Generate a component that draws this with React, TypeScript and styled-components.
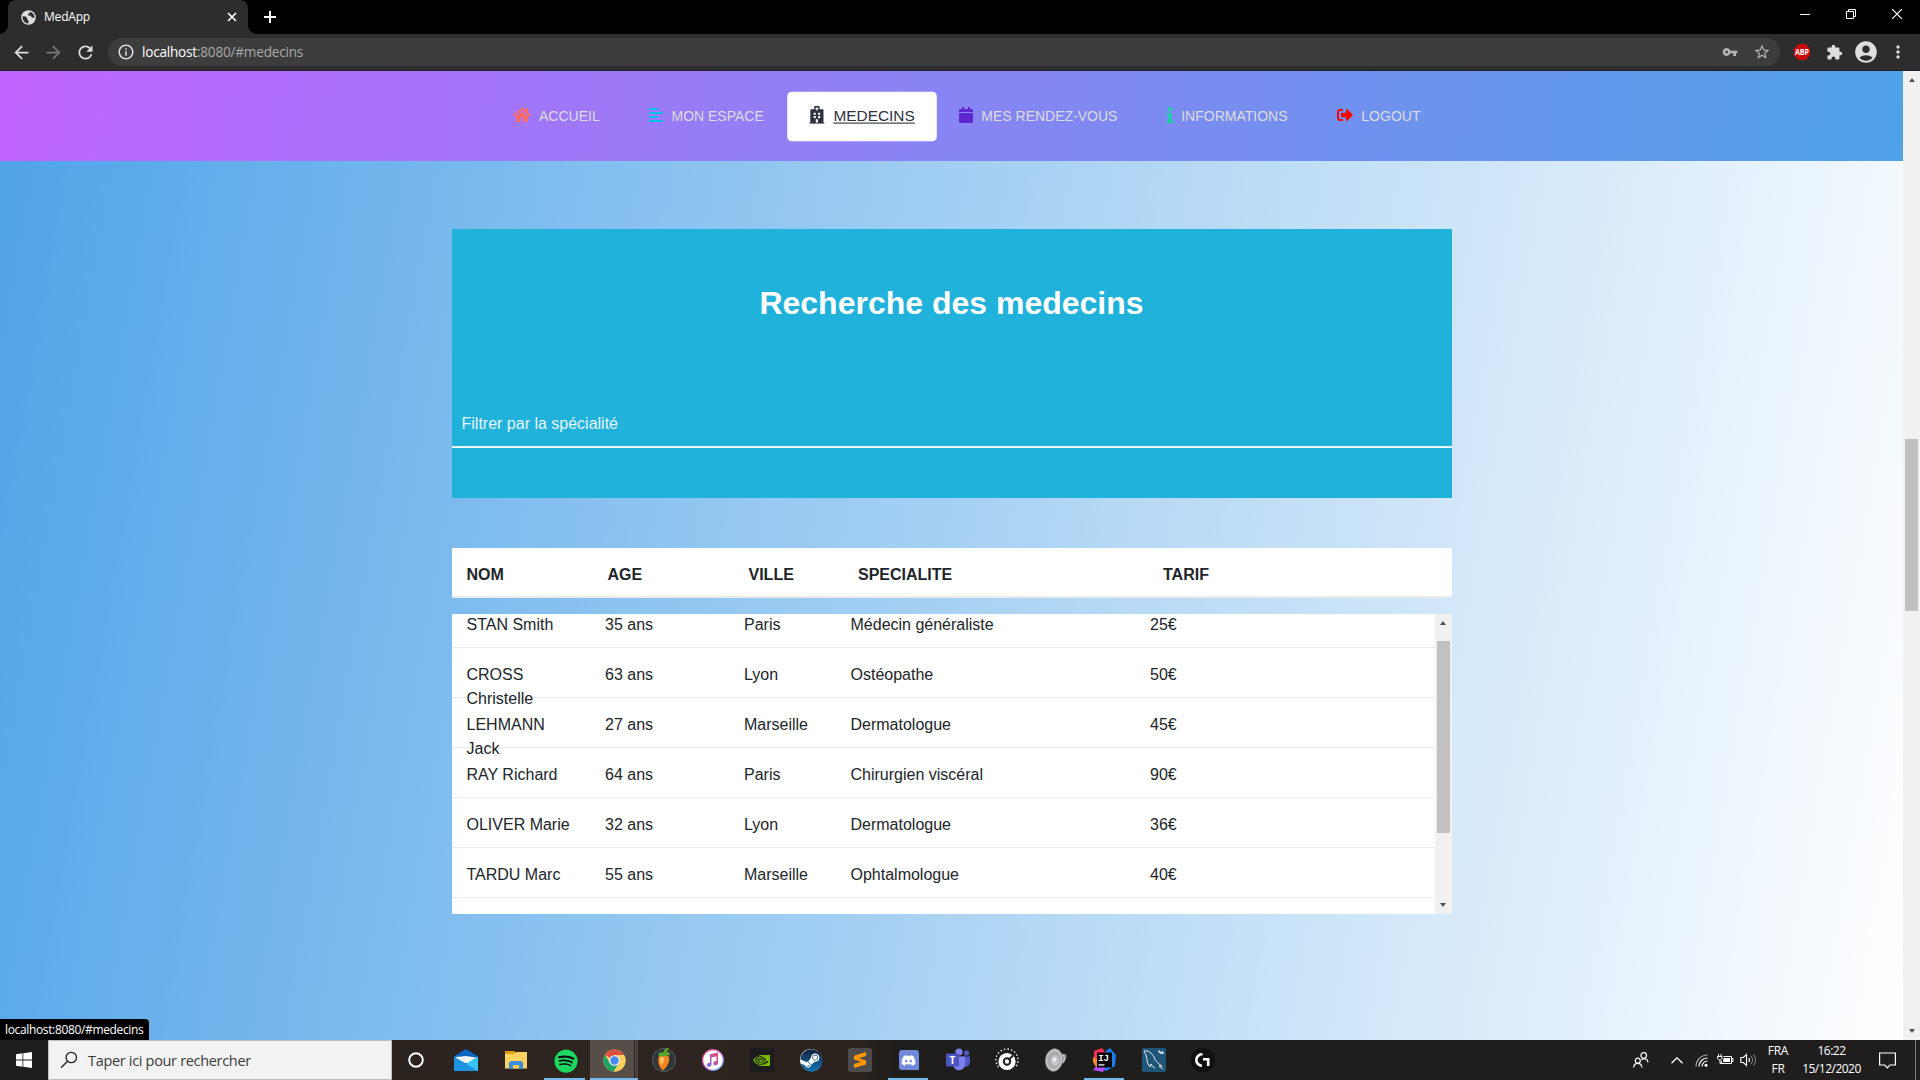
import React from "react";
import styled, { createGlobalStyle, css } from "styled-components";
import {
  FaHome,
  FaAlignLeft,
  FaHospital,
  FaCalendar,
  FaInfo,
  FaSignOutAlt,
  FaSpotify,
  FaSteam,
  FaDiscord,
} from "react-icons/fa";
import {
  MdArrowBack,
  MdArrowForward,
  MdRefresh,
  MdInfoOutline,
  MdVpnKey,
  MdStarBorder,
  MdExtension,
  MdAccountCircle,
  MdMoreVert,
} from "react-icons/md";
import { SiNvidia } from "react-icons/si";

const uiFont = `"Open Sans", "Noto Sans", sans-serif`;
const pageFont = `"Liberation Sans", Arial, sans-serif`;

const GlobalStyle = createGlobalStyle`
  * { box-sizing: border-box; }
  body { margin: 0; overflow: hidden; background: #000; }
  svg { display: block; flex: none; }
`;

const Screen = styled.div`
  width: 1920px;
  height: 1080px;
  display: flex;
  flex-direction: column;
  overflow: hidden;
`;

/* ---------- browser frame ---------- */

const TabStrip = styled.div`
  height: 34px;
  flex: none;
  display: flex;
  background: #000;
  padding-left: 8px;
`;

const Tab = styled.div`
  position: relative;
  width: 240px;
  height: 34px;
  padding: 0 10px 0 13px;
  display: flex;
  align-items: center;
  background: #2d2d2d;
  border-radius: 8px 8px 0 0;
  color: #dedede;
  &::before,
  &::after {
    content: "";
    position: absolute;
    bottom: 0;
    width: 8px;
    height: 8px;
  }
  &::before {
    left: -8px;
    background: radial-gradient(circle at 0 0, #000 7.5px, #2d2d2d 8px);
  }
  &::after {
    right: -8px;
    background: radial-gradient(circle at 100% 0, #000 7.5px, #2d2d2d 8px);
  }
  span {
    flex: 1;
    margin: 0 0 1px 8px;
    font: 12px/16px ${uiFont};
    letter-spacing: -0.2px;
    color: #fff;
  }
`;

const NewTab = styled.div`
  width: 44px;
  display: grid;
  place-items: center;
`;

const WindowButtons = styled.div`
  margin-left: auto;
  display: flex;
  height: 28px;
`;

const WindowButton = styled.div`
  width: 46px;
  display: grid;
  place-items: center;
`;

const Toolbar = styled.div`
  height: 37px;
  flex: none;
  display: flex;
  align-items: center;
  background: #2d2d2d;
  border-bottom: 1px solid #201f26;
  padding: 0 6px 0 5px;
`;

const ToolButton = styled.div<{ $tone?: string }>`
  width: 32px;
  height: 32px;
  display: grid;
  place-items: center;
  color: ${(p) => p.$tone ?? "#dedede"};
`;

const Omnibox = styled.div`
  flex: 1;
  height: 28px;
  margin: 0 6px 0 7px;
  padding: 0 2px 0 9px;
  display: flex;
  align-items: center;
  border-radius: 14px;
  background: #3d3d3d;
  color: #dedede;
`;

const Url = styled.div`
  flex: 1;
  margin-left: 7px;
  font: 13.6px/20px ${uiFont};
  letter-spacing: -0.22px;
  color: #a9a9a9;
  b {
    font-weight: 400;
    color: #fff;
  }
`;

/* ---------- page ---------- */

const Viewport = styled.div`
  height: 969px;
  flex: none;
  display: flex;
`;

const Page = styled.main`
  position: relative;
  width: 1903px;
  font-family: ${pageFont};
  background: linear-gradient(100deg, #4fa3e8, #fff);
  display: flex;
  flex-direction: column;
  align-items: center;
`;

const Nav = styled.nav`
  width: 100%;
  height: 90px;
  display: flex;
  align-items: center;
  gap: 9.8px;
  padding-left: 493px;
  background: linear-gradient(100deg, #c165ff, #4fa3e8);
`;

const NavItem = styled.a<{ $tint: string; $icon: number; $active?: boolean }>`
  height: 45px;
  margin-top: 1px;
  padding: 0 20px;
  display: flex;
  align-items: center;
  gap: 8px;
  border-radius: 4px;
  font-size: 14px;
  line-height: 21px;
  color: #dddddf;
  white-space: nowrap;
  svg {
    color: ${(p) => p.$tint};
    height: 16px;
    width: ${(p) => p.$icon}px;
    margin-bottom: 3px;
  }
  ${(p) =>
    p.$active &&
    css`
      background: #fff;
      color: #2e3240;
      transform: scale(1.1);
      span {
        text-decoration: underline;
      }
    `}
`;

const SearchCard = styled.section`
  width: 1000px;
  height: 269px;
  margin-top: 68px;
  background: #20b2db;
  display: flex;
  flex-direction: column;
  color: #fff;
`;

const Title = styled.h1`
  margin: 54px 0 0;
  font-size: 32px;
  line-height: 40px;
  font-weight: 700;
  text-align: center;
`;

const Filter = styled.div`
  margin-top: 78px;
  height: 47px;
  padding: 11px 10px 0;
  font-size: 16px;
  line-height: 24px;
  color: #e6f4fb;
  border-bottom: 2px solid #eaf5fc;
`;

const HeadRow = styled.div`
  width: 1000px;
  height: 50px;
  margin-top: 50px;
  padding: 15px 15px 0;
  display: grid;
  grid-template-columns: 141px 141px 109.5px 305px 1fr;
  background: #fff;
  border-bottom: 2px solid #ebebeb;
  font-size: 16px;
  line-height: 24px;
  font-weight: 700;
  color: #212529;
`;

const Table = styled.div`
  width: 1000px;
  height: 300px;
  margin-top: 16px;
  display: flex;
  background: #fff;
  overflow: hidden;
`;

const Rows = styled.div`
  flex: 1;
  margin-top: -16px;
`;

const Row = styled.div`
  height: 50px;
  padding: 15px 15px 0;
  display: grid;
  grid-template-columns: 138.5px 139px 106.5px 299.5px 1fr;
  border-bottom: 1px solid #ececee;
  font-size: 16px;
  line-height: 24px;
  color: #212529;
`;

const Name = styled.span`
  max-width: 110px;
`;

const ScrollTrack = styled.div`
  width: 17px;
  display: flex;
  flex-direction: column;
  align-items: center;
  background: #f1f1f1;
`;

const ScrollArrow = styled.div<{ $down?: boolean }>`
  width: 17px;
  height: 17px;
  display: grid;
  place-items: center;
  margin-top: ${(p) => (p.$down ? "auto" : 0)};
  padding-bottom: ${(p) => (p.$down ? "1px" : 0)};
  &::after {
    content: "";
    border: 3.5px solid transparent;
    border-top: ${(p) => (p.$down ? "4px solid #505050" : "0")};
    border-bottom: ${(p) => (p.$down ? "0" : "4px solid #505050")};
  }
`;

const Thumb = styled.div<{ $offset: number; $size: number }>`
  width: 13px;
  height: ${(p) => p.$size}px;
  margin-top: ${(p) => p.$offset}px;
  background: #c1c1c1;
`;

const StatusBubble = styled.div`
  position: absolute;
  left: 0;
  bottom: 0;
  width: 149px;
  height: 21px;
  padding-left: 5px;
  border-radius: 0 4px 0 0;
  background: #000;
  color: #fff;
  font: 12px/21px ${uiFont};
  letter-spacing: -0.35px;
  white-space: nowrap;
`;

/* ---------- taskbar ---------- */

const Taskbar = styled.footer`
  height: 40px;
  flex: none;
  display: flex;
  background: linear-gradient(
    90deg,
    #1f1e1e 0,
    #1f1e1e 60px,
    #2b231e 392px,
    #2f251f 620px,
    #2b221d 860px,
    #1f1e1d 900px,
    #1f1e1d 100%
  );
  color: #fff;
  font-family: ${uiFont};
`;

const Start = styled.div`
  width: 48px;
  display: grid;
  place-items: center;
`;

const SearchBox = styled.div`
  width: 344px;
  display: flex;
  align-items: center;
  gap: 10px;
  padding-left: 11px;
  background: #f2f2f2;
  border: 1px solid #bdbdbd;
  color: #3a3a3a;
  font-size: 14.5px;
  letter-spacing: -0.32px;
`;

const Slot = styled.div<{ $running?: boolean; $active?: boolean; $width?: number }>`
  position: relative;
  width: ${(p) => p.$width ?? 49}px;
  display: grid;
  place-items: center;
  ${(p) =>
    p.$active &&
    css`
      background: linear-gradient(90deg, #574d49 0, #574d49 44px, #2c2624 44px, #2c2624 45px, #4a423e 45px);
      width: 48px;
      margin-right: 1px;
    `}
  &::after {
    content: "";
    position: absolute;
    bottom: 0;
    left: 4px;
    right: 5px;
    ${(p) => p.$active && "left: 0; right: 0;"}
    height: 2px;
    background: ${(p) => (p.$running || p.$active ? "#76b9ed" : "transparent")};
  }
`;

const Disc = styled.div<{ $bg: string; $size?: number; $radius?: string }>`
  width: ${(p) => p.$size ?? 24}px;
  height: ${(p) => p.$size ?? 24}px;
  border-radius: ${(p) => p.$radius ?? "50%"};
  background: ${(p) => p.$bg};
  display: grid;
  place-items: center;
`;

const Tray = styled.div`
  margin-left: auto;
  display: flex;
`;

const TrayCell = styled.div<{ $w: number }>`
  width: ${(p) => p.$w}px;
  display: grid;
  place-items: center;
  align-content: center;
  font-size: 12px;
  line-height: 18px;
  letter-spacing: -0.3px;
  text-align: center;
  white-space: nowrap;
`;

const Clock = styled(TrayCell)`
  letter-spacing: -0.5px;
`;

const ShowDesktop = styled.div`
  width: 5px;
  margin-left: 8px;
  border-left: 1px solid #7b7b7b;
`;

const HEAD = ["NOM", "AGE", "VILLE", "SPECIALITE", "TARIF"];

const DOCTORS = [
  ["STAN Smith", "35 ans", "Paris", "Médecin généraliste", "25€"],
  ["CROSS Christelle", "63 ans", "Lyon", "Ostéopathe", "50€"],
  ["LEHMANN Jack", "27 ans", "Marseille", "Dermatologue", "45€"],
  ["RAY Richard", "64 ans", "Paris", "Chirurgien viscéral", "90€"],
  ["OLIVER Marie", "32 ans", "Lyon", "Dermatologue", "36€"],
  ["TARDU Marc", "55 ans", "Marseille", "Ophtalmologue", "40€"],
];

const GlobeIcon = () => (
  <svg width="15" height="15" viewBox="0 0 15 15">
    <circle cx="7.500" cy="7.500" r="7.300" fill="#dedede" />
    <path
      d="M1.600 6.200 4.700 6.600 6.300 8.200v1.500l1.300 1-.2 2.700C4 13.300 1.300 10.500 1.600 6.200zM6.500 1.800 8.500 1.700 8.800 3 6.900 4.200l.3 1.300 2.500.3 1.200 1.700 2.500.4C13.800 4.500 11 1.300 6.500 1.800z"
      fill="#2d2d2d"
    />
  </svg>
);

const MailIcon = () => (
  <svg width="24" height="24" viewBox="0 0 24 24">
    <path d="M0 8.500 12 1l12 7.500v2L12 16 0 10.500z" fill="#0a5fb4" />
    <path d="M2 8h20v7H2z" fill="#f3f3f3" />
    <path d="M0 8.500 12 16 0 23z" fill="#2aa3e6" />
    <path d="M24 8.500V23H0z" fill="#38c5f5" />
    <path d="M0 9v14h24L8.500 13.800z" fill="#1e93e0" />
    <path d="M0 8.500 12 1l12 7.500-2 1L12 8l-10 1z" fill="#0b64bd" />
  </svg>
);

const FolderIcon = () => (
  <svg width="22" height="18" viewBox="0 0 22 18">
    <path d="M0 0h9l2 2v3H0z" fill="#e2a10a" />
    <path d="M0 3h9l2-2h11v16.500H0z" fill="#fdd462" />
    <path d="M4 18v-6.500L6 10h10l2 1.500V18h-4v-4H8v4z" fill="#3a8fdc" />
    <path d="M8 14h6v3.500H8z" fill="#fbc94a" />
  </svg>
);

const ChromeIcon = () => (
  <svg width="23" height="23" viewBox="0 0 24 24">
    <circle cx="12" cy="12" r="11.500" fill="#fdd15b" />
    <path d="M12 12 2 6.300A11.500 11.500 0 0 1 22 6.300H12z" fill="#dd5144" />
    <path d="M2 6.300A11.500 11.500 0 0 0 11.300 23.500L16.600 14.500 12 17 7.500 15z" fill="#1da462" />
    <path d="M12 6.500h10.100A11.500 11.500 0 0 1 11.300 23.500L16.700 14.600z" fill="#fdd15b" />
    <circle cx="12" cy="12" r="5.600" fill="#f4f4f4" />
    <circle cx="12" cy="12" r="4.400" fill="#4a8af4" />
  </svg>
);

const FruitIcon = () => (
  <svg width="24" height="24" viewBox="0 0 24 24">
    <circle cx="12" cy="12" r="11.500" fill="#2f3436" stroke="#566066" />
    <path d="M7 8c3-2 8-1.500 10 1 1 4-1 9-6 13.500-4-2.500-6-9.500-4-14.500z" fill="#f5861f" />
    <path d="M8.500 9c2-1 3.500 0 3.500 2s-1 5-2.500 6c-1.500-2-2-5-1-8z" fill="#ffc266" />
    <path d="M6 6c2-2 4-2 5-1 1-4 4-6 6-5-1 1-2 3-2 4 2 0 3 1 3 3-3 0-4 2-6 1-2 1-5 1-6-2z" fill="#58a52c" />
  </svg>
);

const NoteIcon = () => (
  <svg width="24" height="24" viewBox="0 0 24 24">
    <defs>
      <linearGradient id="ring" x1="0" y1="0" x2="1" y2="1">
        <stop offset="0" stopColor="#ff4f6d" />
        <stop offset=".5" stopColor="#c65be0" />
        <stop offset="1" stopColor="#38b6f0" />
      </linearGradient>
      <linearGradient id="note" x1="1" y1="0" x2="0" y2="1">
        <stop offset="0" stopColor="#f8416b" />
        <stop offset="1" stopColor="#6a6cf2" />
      </linearGradient>
    </defs>
    <circle cx="12" cy="12" r="10.400" fill="#fff" stroke="url(#ring)" strokeWidth="1.200" />
    <path
      d="M9 6.200 17 4.500v10.800a2.300 2 0 1 1-1.500-2V8.300L10.500 9.400v7.400A2.300 2 0 1 1 9 14.900z"
      fill="url(#note)"
    />
  </svg>
);

const SublimeIcon = () => (
  <svg width="24" height="24" viewBox="0 0 24 24">
    <rect width="24" height="24" rx="2" fill="#4b4b4b" />
    <path d="M6 7.800 18 4v4l-7 2.200 7 2.200v4L6 20v-4l7-2.200-7-2.200z" fill="#ff9800" />
  </svg>
);

const DiscordIcon = () => (
  <Disc $bg="#7289da" $size={20} $radius="3px 3px 0 3px">
    <FaDiscord size={15} color="#fff" />
  </Disc>
);

const TeamsIcon = () => (
  <svg width="24" height="24" viewBox="0 0 24 24">
    <circle cx="20.500" cy="5" r="2.600" fill="#5059c9" />
    <circle cx="13" cy="4" r="3.600" fill="#7b83eb" />
    <path d="M16 8.500h8v6.500a4.500 4.500 0 0 1-7 3z" fill="#5059c9" />
    <path d="M7.500 8.500H19v8a6 6 0 0 1-11.500 2z" fill="#7b83eb" />
    <rect y="5.500" width="13" height="13" rx="1" fill="#4b53bc" />
    <text x="6.500" y="15.600" textAnchor="middle" fontSize="10" fontWeight="700" fill="#fff" fontFamily="Open Sans">
      T
    </text>
  </svg>
);

const DialIcon = () => (
  <svg width="24" height="24" viewBox="0 0 24 24">
    <path
      d="M3.500 19A11 11 0 1 1 20.500 19"
      fill="none"
      stroke="#fff"
      strokeWidth="1.400"
      strokeDasharray="1.400 2.200"
    />
    <circle cx="12" cy="13.500" r="8.600" fill="#fff" />
    <circle cx="12" cy="13.500" r="3.200" fill="none" stroke="#1f1e1d" strokeWidth="2" />
    <path d="m13.500 12 4.500-4.500" stroke="#1f1e1d" strokeWidth="1.800" />
  </svg>
);

const SpeakerIcon = () => (
  <svg width="22" height="24" viewBox="0 0 22 24">
    <path d="M12 2.500c3 3 6 3.500 9 3.500l.5 4c-1 1-1.500 3-2.500 5-3 0-5 3-8 6.500z" fill="#8e9294" />
    <path d="M18 6.500c1.500 2 1.500 5 .5 8" fill="none" stroke="#d6d8d9" strokeWidth="1" />
    <ellipse cx="9" cy="12" rx="8.500" ry="11.300" transform="rotate(8 9 12)" fill="#c9cccd" stroke="#8a8d8f" strokeWidth=".8" />
    <ellipse cx="9" cy="12" rx="6.800" ry="9.300" transform="rotate(8 9 12)" fill="#a9adaf" />
    <ellipse cx="10" cy="12.500" rx="4" ry="5" fill="#c3c7c9" />
    <ellipse cx="9.500" cy="11.500" rx="1.800" ry="2.200" fill="#e9ebec" />
  </svg>
);

const IntelliJIcon = () => (
  <svg width="24" height="24" viewBox="0 0 24 24">
    <path d="M1 3 9 0l6 8-5 9-9-3z" fill="#fc3158" />
    <path d="M0 9l6 3-2 9-4-7z" fill="#f98b2c" />
    <path d="M13 3 17 0l6 7-1 11-9 5-6-3z" fill="#1a7df0" />
    <path d="M0 22 8 13l5 5-3 6z" fill="#b74af7" />
    <rect x="4" y="4.500" width="15" height="15" fill="#000" />
    <text x="5.200" y="12.800" fontSize="9" fontWeight="700" fill="#fff" fontFamily="Liberation Mono">
      IJ
    </text>
    <rect x="5.500" y="16.300" width="6" height="1.300" fill="#fff" />
  </svg>
);

const DolphinIcon = () => (
  <svg width="24" height="24" viewBox="0 0 24 24">
    <rect width="24" height="24" rx="2" fill="#1f5577" />
    <path
      d="M2 3c4-1 8 2 10 6 1 3 3 6 8 9l-3 0 4 3M2 3c2 3 2 5 3 8 0 3 1 6 3 8l1-3c1 2 2 3 4 4"
      fill="none"
      stroke="#e6eef3"
      strokeWidth="1"
    />
    <path d="m17 2 2 2 2-1 1 3-3 0-3-2z" fill="#d7e3ea" />
  </svg>
);

const HubIcon = () => (
  <Disc $bg="#101010">
    <svg width="15" height="14" viewBox="0 0 15 14">
      <path d="M7.500 1.300H7a5.700 5.700 0 0 0 0 11.400M8 6.200h5.200V13M8.500 6.200H13" fill="none" stroke="#fff" strokeWidth="2.600" />
    </svg>
  </Disc>
);

export default function App() {
  return (
    <Screen>
      <GlobalStyle />
      <TabStrip>
        <Tab>
          <GlobeIcon />
          <span>MedApp</span>
          <svg width="12" height="12" viewBox="0 0 12 12" stroke="#fff" strokeWidth="1.700">
            <path d="m2 2 8 8M10 2l-8 8" />
          </svg>
        </Tab>
        <NewTab>
          <svg width="12" height="12" viewBox="0 0 12 12" stroke="#fff" strokeWidth="2">
            <path d="M6 0v12M0 6h12" />
          </svg>
        </NewTab>
        <WindowButtons>
          <WindowButton>
            <svg width="10" height="10" viewBox="0 0 10 10" shapeRendering="crispEdges">
              <rect y="5" width="10" height="1" fill="#fff" />
            </svg>
          </WindowButton>
          <WindowButton>
            <svg width="10" height="10" viewBox="0 0 10 10" fill="none" stroke="#fff">
              <path d="M.5 2.500h7v7h-7zM2.500 2.500v-2h7v7h-2" />
            </svg>
          </WindowButton>
          <WindowButton>
            <svg width="10" height="10" viewBox="0 0 10 10" stroke="#fff" strokeWidth="1.200">
              <path d="m0 0 10 10M10 0 0 10" />
            </svg>
          </WindowButton>
        </WindowButtons>
      </TabStrip>

      <Toolbar>
        <ToolButton><MdArrowBack size={21} /></ToolButton>
        <ToolButton $tone="#777"><MdArrowForward size={21} /></ToolButton>
        <ToolButton><MdRefresh size={21} /></ToolButton>
        <Omnibox>
          <MdInfoOutline size={18} />
          <Url>
            <b>localhost</b>:8080/#medecins
          </Url>
          <ToolButton $tone="#b4b4b4"><MdVpnKey size={16} /></ToolButton>
          <ToolButton $tone="#b4b4b4"><MdStarBorder size={18} /></ToolButton>
        </Omnibox>
        <ToolButton>
          <svg width="16" height="16" viewBox="0 0 16 16">
            <path d="M4.700 0h6.600L16 4.700v6.600L11.300 16H4.700L0 11.300V4.700z" fill="#c70d0d" />
            <text x="1" y="11" fontSize="8" fontWeight="700" fill="#fff" fontFamily="Open Sans" textLength="14" lengthAdjust="spacingAndGlyphs">
              ABP
            </text>
          </svg>
        </ToolButton>
        <ToolButton><MdExtension size={17} /></ToolButton>
        <ToolButton><MdAccountCircle size={26} /></ToolButton>
        <ToolButton><MdMoreVert size={20} /></ToolButton>
      </Toolbar>

      <Viewport>
        <Page>
          <Nav>
            <NavItem $tint="#ff6b6b" $icon={18}><FaHome /><span>ACCUEIL</span></NavItem>
            <NavItem $tint="#0abde3" $icon={14}><FaAlignLeft /><span>MON ESPACE</span></NavItem>
            <NavItem $tint="#2e3240" $icon={14} $active><FaHospital /><span>MEDECINS</span></NavItem>
            <NavItem $tint="#5f27cd" $icon={14}><FaCalendar /><span>MES RENDEZ-VOUS</span></NavItem>
            <NavItem $tint="#1dd1a1" $icon={6}><FaInfo /><span>INFORMATIONS</span></NavItem>
            <NavItem $tint="#ff0000" $icon={16}><FaSignOutAlt /><span>LOGOUT</span></NavItem>
          </Nav>

          <SearchCard>
            <Title>Recherche des medecins</Title>
            <Filter>Filtrer par la spécialité</Filter>
          </SearchCard>

          <HeadRow>
            {HEAD.map((label) => (
              <span key={label}>{label}</span>
            ))}
          </HeadRow>

          <Table>
            <Rows>
              {DOCTORS.map(([name, ...cells]) => (
                <Row key={name}>
                  <Name>{name}</Name>
                  {cells.map((cell) => (
                    <span key={cell}>{cell}</span>
                  ))}
                </Row>
              ))}
            </Rows>
            <ScrollTrack>
              <ScrollArrow />
              <Thumb $offset={10} $size={192} />
              <ScrollArrow $down />
            </ScrollTrack>
          </Table>

          <StatusBubble>localhost:8080/#medecins</StatusBubble>
        </Page>
        <ScrollTrack>
          <ScrollArrow />
          <Thumb $offset={351} $size={172} />
          <ScrollArrow $down />
        </ScrollTrack>
      </Viewport>

      <Taskbar>
        <Start>
          <svg width="16" height="16" viewBox="0 0 16 16" fill="#fff">
            <path d="M0 2.200 6.500 1.300V7.600H0zM7.300 1.200 16 0v7.600H7.300zM0 8.400h6.500v6.300L0 13.800zM7.300 8.400H16V16l-8.700-1.200z" />
          </svg>
        </Start>
        <SearchBox>
          <svg width="18" height="18" viewBox="0 0 18 18" fill="none" stroke="#222" strokeWidth="1.300">
            <circle cx="11.300" cy="6.500" r="5.200" />
            <path d="m7.600 10.200-6.600 6.600" />
          </svg>
          <span>Taper ici pour rechercher</span>
        </SearchBox>
        <Slot $width={48}>
          <svg width="16" height="16" viewBox="0 0 16 16" fill="none" stroke="#fff" strokeWidth="2">
            <circle cx="8" cy="8" r="6.800" />
          </svg>
        </Slot>
        <Slot $width={52}><MailIcon /></Slot>
        <Slot $width={48}><FolderIcon /></Slot>
        <Slot $running $width={50}>
          <Disc $bg="#0b0b0b" $size={23}><FaSpotify size={24} color="#1ed760" /></Disc>
        </Slot>
        <Slot $active><ChromeIcon /></Slot>
        <Slot><FruitIcon /></Slot>
        <Slot><NoteIcon /></Slot>
        <Slot>
          <Disc $bg="#1c1c1c" $radius="0"><SiNvidia size={17} color="#76b900" /></Disc>
        </Slot>
        <Slot>
          <Disc $bg="#fff" $size={22}>
            <svg width="23" height="23" viewBox="0 0 23 23">
              <defs>
                <linearGradient id="steam" x1="0" y1="0" x2="0" y2="1">
                  <stop offset="0" stopColor="#12203f" />
                  <stop offset="1" stopColor="#1476b5" />
                </linearGradient>
              </defs>
              <FaSteam size={23} fill="url(#steam)" />
            </svg>
          </Disc>
        </Slot>
        <Slot><SublimeIcon /></Slot>
        <Slot $running><DiscordIcon /></Slot>
        <Slot><TeamsIcon /></Slot>
        <Slot><DialIcon /></Slot>
        <Slot><SpeakerIcon /></Slot>
        <Slot $running><IntelliJIcon /></Slot>
        <Slot><DolphinIcon /></Slot>
        <Slot><HubIcon /></Slot>

        <Tray>
          <TrayCell $w={48}>
            <svg width="16" height="16" viewBox="0 0 16 16" fill="none" stroke="#fff" strokeWidth="1.200">
              <circle cx="10.700" cy="3.500" r="2.800" />
              <circle cx="4.800" cy="8.700" r="2.500" />
              <path d="M.7 15.500c0-5.500 8-5.500 8.200 0M8.600 8c2-2.300 6-1.600 6.500 2.300" />
            </svg>
          </TrayCell>
          <TrayCell $w={24}>
            <svg width="12" height="7" viewBox="0 0 12 7" fill="none" stroke="#fff" strokeWidth="1.300">
              <path d="m.5 6.300 5.500-5.500 5.500 5.500" />
            </svg>
          </TrayCell>
          <TrayCell $w={25}>
            <svg width="13" height="13" viewBox="0 0 13 13" fill="none" strokeWidth="1.200">
              <path d="M1 12.500A11.500 11.500 0 0 1 12.500 1" stroke="#aaa" />
              <path d="M4 12.500A8.500 8.500 0 0 1 12.500 4M7 12.500A5.500 5.500 0 0 1 12.500 7" stroke="#fff" />
              <circle cx="11" cy="11.200" r="1.500" fill="#fff" />
            </svg>
          </TrayCell>
          <TrayCell $w={22}>
            <svg width="17" height="12" viewBox="0 0 17 12" fill="none" stroke="#fff">
              <path d="M6.500 2.500h8v7h-10V7M14.500 4.500h1.500v3h-1.500M1.500 0v2M4 0v2M.5 2.500H5v2L3.500 6h-1L.5 4.500zM3 6v3.500h2" />
              <path d="M6.500 4h6.500v4H6z" fill="#fff" stroke="none" />
            </svg>
          </TrayCell>
          <TrayCell $w={25}>
            <svg width="17" height="14" viewBox="0 0 17 14" fill="none" stroke="#fff" strokeWidth="1.100">
              <path d="M.8 4.500h2.500L6.500 1.500v11L3.300 9.500H.8z" />
              <path d="M8.700 5c1 1.200 1 2.800 0 4" />
              <path d="M11 3c2 2.300 2 5.700 0 8M13.300 1.500c3 3.300 3 7.700 0 11" stroke="#888" />
            </svg>
          </TrayCell>
          <TrayCell $w={34}>
            <span>FRA</span>
            <span>FR</span>
          </TrayCell>
          <Clock $w={73}>
            <span>16:22</span>
            <span>15/12/2020</span>
          </Clock>
          <TrayCell $w={39}>
            <svg width="17" height="17" viewBox="0 0 17 17" fill="none" stroke="#fff" strokeWidth="1.200">
              <path d="M.6 1h15.800v12h-5.500l-2.600 2.800L5.800 13H.6z" />
            </svg>
          </TrayCell>
          <ShowDesktop />
        </Tray>
      </Taskbar>
    </Screen>
  );
}
